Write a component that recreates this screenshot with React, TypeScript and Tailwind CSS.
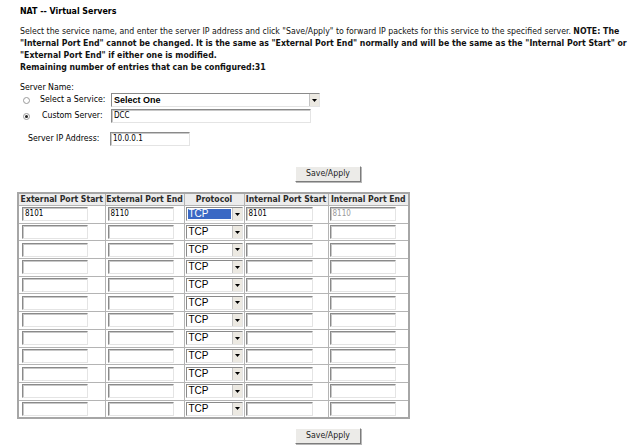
import React from 'react';

const body = { fontFamily: '"DejaVu Sans Condensed", "DejaVu Sans", sans-serif' };
const ctrl = { fontFamily: '"Liberation Sans", Arial, sans-serif' };

// sunken text box, like the old IE form fields
const TextBox = ({ value = '', width, muted = false }: { value?: string; width: string; muted?: boolean }) => (
  <div
    className={`${width} h-[14px] bg-white border border-t-[#8a8a8a] border-l-[#8a8a8a] border-b-[#e4e4e4] border-r-[#e4e4e4] shadow-[inset_1px_1px_0_#c8c8c8] flex items-center pl-[2px] text-[8px] leading-none ${muted ? 'text-[#9a9a9a]' : 'text-black'}`}
    style={body}
  >
    {value}
  </div>
);

const Arrow = () => (
  <div className="w-[10px] h-full bg-[#ece9e2] border-l border-[#c4c4c4] flex items-center justify-center">
    <svg width="5" height="3" viewBox="0 0 5 3">
      <path d="M0 0h5L2.5 3z" fill="#000" />
    </svg>
  </div>
);

const Dropdown = ({ value, width, selected = false, bold = false }: { value: string; width: string; selected?: boolean; bold?: boolean }) => (
  <div className={`${width} h-[14px] bg-white border border-t-[#8a8a8a] border-l-[#8a8a8a] border-b-[#e4e4e4] border-r-[#e4e4e4] flex items-stretch`}>
    <div className="flex-1 flex items-center p-[1px]">
      <div
        className={`h-full flex-1 flex items-center pl-[1px] leading-none ${bold ? 'font-bold text-[9px]' : 'text-[10px]'} ${selected ? 'bg-[#3a68c4] text-white' : 'text-black'}`}
        style={ctrl}
      >
        {value}
      </div>
    </div>
    <Arrow />
  </div>
);

const Radio = ({ checked }: { checked?: boolean }) => (
  <div className="w-[7px] h-[7px] rounded-full border border-[#9a9a9a] bg-white flex items-center justify-center">
    {checked && <div className="w-[3px] h-[3px] rounded-full bg-[#222]" />}
  </div>
);

const SaveButton = () => (
  <div
    className="w-[66px] h-[16px] bg-[#ecebe8] border border-t-white border-l-white border-b-[#7c7c7c] border-r-[#7c7c7c] shadow-[1px_1px_0_#b8b8b8] flex items-center justify-center text-[8.7px] text-[#222]"
    style={body}
  >
    Save/Apply
  </div>
);

const headers = ['External Port Start', 'External Port End', 'Protocol', 'Internal Port Start', 'Internal Port End'];

const rows = Array.from({ length: 12 }, (_, i) =>
  i === 0 ? { extStart: '8101', extEnd: '8110', intStart: '8101', intEnd: '8110' } : { extStart: '', extEnd: '', intStart: '', intEnd: '' }
);

export default function App() {
  return (
    <div className="w-[640px] h-[448px] bg-white text-black overflow-hidden" style={body}>
      <div className="pl-[20px] pt-[6px]">
        <h1 className="text-[8.8px] font-bold leading-[11px]">NAT -- Virtual Servers</h1>

        <p className="mt-[8px] text-[8.7px] leading-[12px] text-[#111] whitespace-nowrap">
          Select the service name, and enter the server IP address and click "Save/Apply" to forward IP packets for this service to the specified server.{' '}
          <b>NOTE: The</b>
          <br />
          <b>"Internal Port End" cannot be changed. It is the same as "External Port End" normally and will be the same as the "Internal Port Start" or</b>
          <br />
          <b>"External Port End" if either one is modified.</b>
          <br />
          <b>Remaining number of entries that can be configured:31</b>
        </p>

        <div className="mt-[9px] text-[8.7px] leading-[11px]">Server Name:</div>

        <div className="flex items-center h-[14px] text-[8.7px]">
          <div className="w-[20px] pl-[3px]">
            <Radio />
          </div>
          <span className="w-[71px]">Select a Service:</span>
          <Dropdown value="Select One" width="w-[209px]" bold />
        </div>

        <div className="mt-[2px] flex items-center h-[14px] text-[8.7px]">
          <div className="w-[22px] pl-[3px]">
            <Radio checked />
          </div>
          <span className="w-[69px]">Custom Server:</span>
          <TextBox value="DCC" width="w-[200px]" />
        </div>

        <div className="mt-[9px] flex items-center h-[14px] text-[8.7px]">
          <span className="w-[90px] pl-[8px]">Server IP Address:</span>
          <TextBox value="10.0.0.1" width="w-[80px]" />
        </div>

        <div className="mt-[20px] pl-[275px]">
          <SaveButton />
        </div>
      </div>

      <table className="ml-[17px] mt-[10px] border-collapse border-2 border-[#a6a6a6] table-fixed w-[391px]">
        <colgroup>
          <col className="w-[87px]" />
          <col className="w-[79px]" />
          <col className="w-[60px]" />
          <col className="w-[84px]" />
          <col className="w-[81px]" />
        </colgroup>
        <thead>
          <tr className="h-[12px]">
            {headers.map((h) => (
              <th
                key={h}
                className="border border-[#b4b4b4] bg-[#ececec] p-0 text-[8.6px] leading-[11px] font-bold text-[#2a2a2a] whitespace-nowrap text-center"
              >
                {h}
              </th>
            ))}
          </tr>
        </thead>
        <tbody>
          {rows.map((r, i) => (
            <tr key={i} className="h-[17.7px]">
              <td className="border border-[#b4b4b4] p-0 pl-[3px]">
                <TextBox value={r.extStart} width="w-[66px]" />
              </td>
              <td className="border border-[#b4b4b4] p-0 pl-[2px]">
                <TextBox value={r.extEnd} width="w-[66px]" />
              </td>
              <td className="border border-[#b4b4b4] p-0 pl-[1px]">
                <Dropdown value="TCP" width="w-[57px]" selected={i === 0} />
              </td>
              <td className="border border-[#b4b4b4] p-0 pl-[1px]">
                <TextBox value={r.intStart} width="w-[67px]" />
              </td>
              <td className="border border-[#b4b4b4] p-0 pl-[1px]">
                <TextBox value={r.intEnd} width="w-[66px]" muted />
              </td>
            </tr>
          ))}
        </tbody>
      </table>

      <div className="mt-[9px] pl-[295px]">
        <SaveButton />
      </div>
    </div>
  );
}
